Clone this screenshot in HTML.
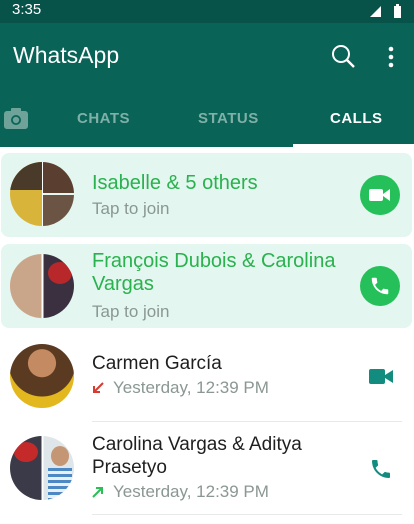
<!DOCTYPE html>
<html><head><meta charset="utf-8"><style>
*{margin:0;padding:0;box-sizing:border-box}
body{width:414px;height:524px;overflow:hidden;background:#fff;font-family:"Liberation Sans",Arial,sans-serif;position:relative}
.abs{position:absolute}
.sb{top:0;left:0;width:414px;height:23px;background:#075249}
.ab{top:23px;left:0;width:414px;height:124px;background:#0a6357}
.card{left:1px;width:411px;background:#e3f6ef;border-radius:8px}
.av{width:64px;height:64px;border-radius:50%;overflow:hidden;left:10px}
.t{left:92px;font-size:19px;line-height:23px}
.g{color:#29b24e;font-size:20px}
.k{color:#1f1f1f}
.s{left:92px;font-size:17px;color:#8a9793}
.circ{width:40px;height:40px;border-radius:50%;background:#25c05a;left:360px}
.div{left:92px;width:310px;height:1px;background:#e8e8e8}
</style></head><body>
<div class="abs sb"></div>
<div class="abs" style="left:12px;top:1px;color:#fff;font-size:15px">3:35</div>
<svg class="abs" style="left:370px;top:4px" width="36" height="14"><polygon points="0,13 11,13 11,2" fill="#fff"/><rect x="24" y="2" width="7" height="12" fill="#fff"/><rect x="26" y="0" width="3" height="2" fill="#fff"/></svg>
<div class="abs ab"></div>
<div class="abs" style="left:13px;top:42px;color:#fff;font-size:23px">WhatsApp</div>
<svg class="abs" style="left:330px;top:44px" width="26" height="26"><circle cx="11" cy="10" r="8" stroke="#fff" stroke-width="2" fill="none"/><line x1="17" y1="16" x2="24" y2="23" stroke="#fff" stroke-width="2.4"/></svg>
<svg class="abs" style="left:387px;top:45px" width="8" height="24"><circle cx="4" cy="4" r="2.3" fill="#fff"/><circle cx="4" cy="12" r="2.3" fill="#fff"/><circle cx="4" cy="20" r="2.3" fill="#fff"/></svg>
<svg class="abs" style="left:4px;top:108px" width="25" height="22"><rect x="0" y="3" width="24" height="18" rx="3" fill="#6fa39a"/><rect x="7" y="0" width="10" height="5" rx="1" fill="#6fa39a"/><circle cx="12" cy="12" r="5" fill="#0a6357"/><circle cx="12" cy="12" r="3.2" fill="#6fa39a"/></svg>
<div class="abs" style="left:77px;top:110px;color:#7fb0a8;font-size:15px;font-weight:bold;letter-spacing:.5px">CHATS</div>
<div class="abs" style="left:198px;top:110px;color:#7fb0a8;font-size:15px;font-weight:bold;letter-spacing:.5px">STATUS</div>
<div class="abs" style="left:330px;top:110px;color:#fff;font-size:15px;font-weight:bold;letter-spacing:.5px">CALLS</div>
<div class="abs" style="left:293px;top:144px;width:121px;height:3px;background:#fff"></div>

<div class="abs card" style="top:153px;height:84px"></div>
<div class="abs card" style="top:244px;height:84px"></div>

<div class="abs av" style="top:162px;background:linear-gradient(90deg,#d9b43a 0 50%,#fff 50% 52%,transparent 52%)"><div class="abs" style="left:33px;top:0;width:31px;height:31px;background:#5a3f30"></div><div class="abs" style="left:33px;top:33px;width:31px;height:31px;background:#6b5443"></div><div class="abs" style="left:0;top:0;width:32px;height:28px;background:#4a3a2a"></div></div>
<div class="abs t g" style="top:172px">Isabelle &amp; 5 others</div>
<div class="abs s" style="top:199px">Tap to join</div>
<div class="abs circ" style="top:175px"></div>
<svg class="abs" style="left:369px;top:186px" width="22" height="18"><rect x="0" y="3" width="14" height="12" rx="2" fill="#fff"/><polygon points="14,8 21,3 21,15 14,10" fill="#fff"/></svg>

<div class="abs av" style="top:254px;background:linear-gradient(90deg,#c9a58a 0 49%,#fff 49% 52%,#3a3040 52%)"><div class="abs" style="left:38px;top:8px;width:24px;height:22px;border-radius:50%;background:#b8282a"></div></div>
<div class="abs t g" style="top:250px">François Dubois &amp; Carolina<br>Vargas</div>
<div class="abs s" style="top:302px">Tap to join</div>
<div class="abs circ" style="top:266px"></div>
<svg class="abs" style="left:369px;top:275px" width="22" height="22" viewBox="0 0 24 24"><path fill="#fff" d="M6.6 10.8c1.4 2.8 3.8 5.1 6.6 6.6l2.2-2.2c.3-.3.7-.4 1-.2 1.1.4 2.300.6 3.600.6.6 0 1 .4 1 1V20c0 .6-.4 1-1 1C10.600 21 3 13.400 3 4c0-.6.4-1 1-1h3.5c.6 0 1 .4 1 1 0 1.3.2 2.5.6 3.6.1.3 0 .7-.2 1z"/></svg>

<div class="abs av" style="top:344px;background:radial-gradient(circle at 50% 30%,#c48a62 0 25%,#5b3a22 26% 60%,#e2b81e 61%)"></div>
<div class="abs t k" style="top:352px">Carmen García</div>
<svg class="abs" style="left:91px;top:381px" width="14" height="14"><line x1="12" y1="2" x2="3" y2="11" stroke="#d63b2f" stroke-width="2"/><polyline points="3,5 3,11 9,11" stroke="#d63b2f" stroke-width="2" fill="none"/></svg>
<div class="abs s" style="top:378px;left:113px">Yesterday, 12:39 PM</div>
<svg class="abs" style="left:369px;top:368px" width="25" height="17"><rect x="0" y="1" width="16" height="15" rx="2" fill="#128c7e"/><polygon points="16,7 24,2 24,15 16,10" fill="#128c7e"/></svg>
<div class="abs div" style="top:421px"></div>

<div class="abs av" style="top:436px;background:linear-gradient(90deg,#3a3a48 0 49%,#fff 49% 52%,#dfe6ea 52%)"><div class="abs" style="left:4px;top:6px;width:24px;height:20px;border-radius:50%;background:#c52a2a"></div><div class="abs" style="left:38px;top:32px;width:24px;height:32px;background:repeating-linear-gradient(#4b88c4 0 3px,#e9f0f5 3px 6px)"></div><div class="abs" style="left:41px;top:10px;width:18px;height:20px;border-radius:50%;background:#c49674"></div></div>
<div class="abs t k" style="top:433px">Carolina Vargas &amp; Aditya<br>Prasetyo</div>
<svg class="abs" style="left:91px;top:485px" width="14" height="14"><line x1="2" y1="12" x2="11" y2="3" stroke="#2bbf55" stroke-width="2"/><polyline points="5,3 11,3 11,9" stroke="#2bbf55" stroke-width="2" fill="none"/></svg>
<div class="abs s" style="top:482px;left:113px">Yesterday, 12:39 PM</div>
<svg class="abs" style="left:369px;top:457px" width="24" height="24" viewBox="0 0 24 24"><path fill="#128c7e" d="M6.6 10.8c1.4 2.8 3.8 5.1 6.6 6.6l2.2-2.2c.3-.3.7-.4 1-.2 1.1.4 2.3.6 3.6.6.6 0 1 .4 1 1V20c0 .6-.4 1-1 1C10.6 21 3 13.4 3 4c0-.6.4-1 1-1h3.5c.6 0 1 .4 1 1 0 1.3.2 2.5.6 3.6.1.3 0 .7-.2 1z"/></svg>
<div class="abs div" style="top:514px"></div>
</body></html>
